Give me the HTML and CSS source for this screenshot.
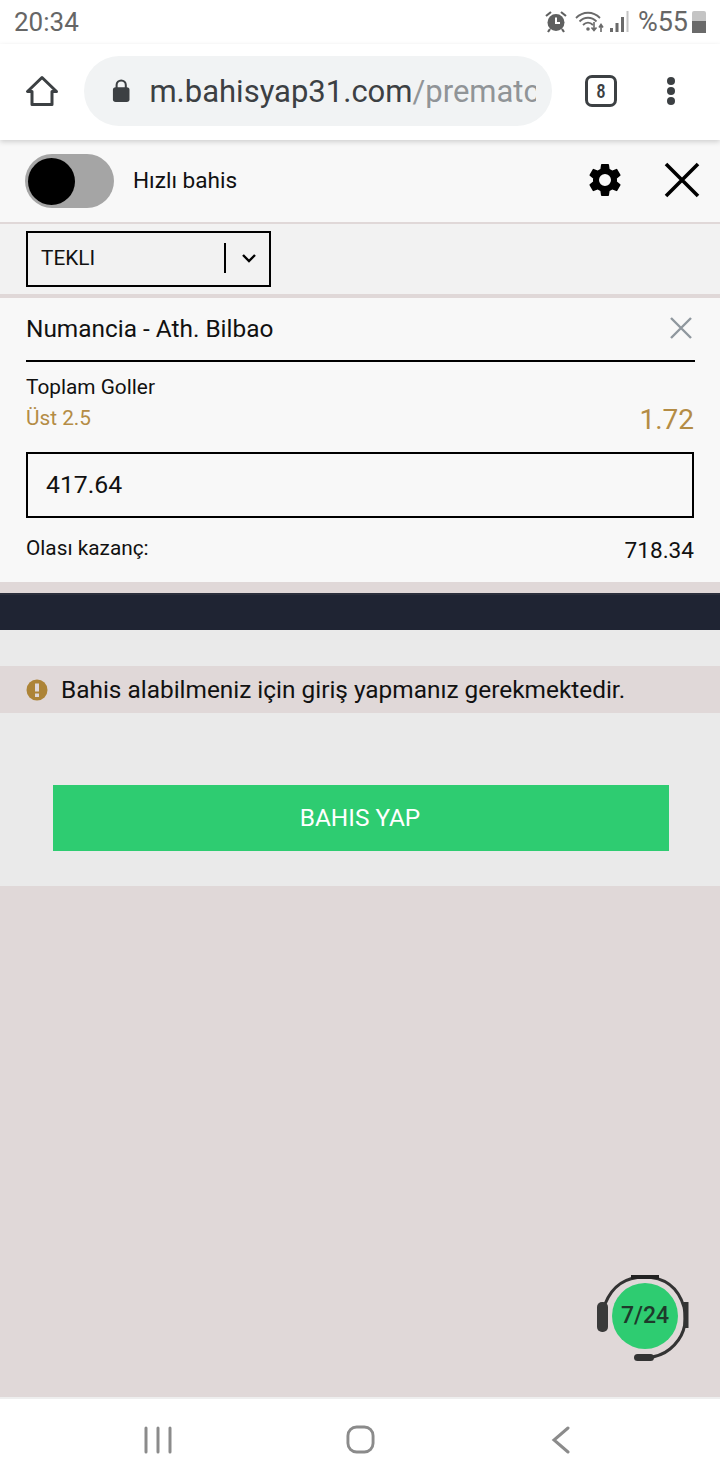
FILE: index.html
```html
<!DOCTYPE html>
<html lang="tr">
<head>
    <meta charset="UTF-8">
    <meta name="viewport" content="width=device-width, initial-scale=1.0">
    <title>Bahis</title>
    <link rel="stylesheet" href="styles.css">
</head>
<body>
    <div class="statusBar">
        <span class="clock">20:34</span>
        <div class="statusIcons">
            <svg class="alarm" width="24" height="24" viewBox="0 0 24 24">
                <circle cx="12" cy="12.5" r="8.5" fill="#5f6060"/>
                <path d="M12 7.5v5.5h4" fill="none" stroke="#fff" stroke-width="2"/>
                <path d="M2 6l5-4M22 6l-5-4M6 19l-2 3M18 19l2 3" fill="none" stroke="#5f6060" stroke-width="2.2"/>
            </svg>
            <svg class="wifi" width="30" height="24" viewBox="0 0 30 24">
                <path d="M1 8c7-7 17-7 24 0M4.500 11.500c5-5 12-5 17 0M8 15c3-3 7-3 10 0" fill="none" stroke="#6a6a6a" stroke-width="1.800"/>
                <circle cx="13" cy="19" r="1.800" fill="#6a6a6a"/>
                <path d="M19 12v8M16.500 17.500l2.500 3 2.500-3M26 22v-7M24 17.500l2-3 2 3" fill="none" stroke="#6a6a6a" stroke-width="1.600"/>
            </svg>
            <svg class="signal" width="20" height="24" viewBox="0 0 20 24">
                <rect x="1" y="18" width="3" height="4" fill="#6a6a6a"/>
                <rect x="6.500" y="13" width="3" height="9" fill="#6a6a6a"/>
                <rect x="12" y="7" width="3" height="15" fill="#6a6a6a"/>
                <rect x="17.500" y="1" width="2" height="21" fill="#c4c4c4"/>
            </svg>
            <span class="battery">%55</span>
            <div class="batteryIcon"><div class="batteryFill"></div></div>
        </div>
    </div>

    <div class="toolbar">
        <svg class="homeIcon" width="36" height="36" viewBox="0 0 36 36">
            <path d="M18 4.500L3.500 18.500h4.500v13h20v-13h4.500z" fill="none" stroke="#3c4043" stroke-width="3" stroke-linejoin="round"/>
        </svg>
        <div class="urlBar">
            <svg class="lockIcon" width="20" height="26" viewBox="0 0 20 26">
                <rect x="1" y="9" width="18" height="16" rx="3" fill="#3c4043"/>
                <path d="M5 10V6.500a5 5 0 0 1 10 0V10" fill="none" stroke="#3c4043" stroke-width="2.200"/>
            </svg>
            <div class="url"><span class="urlHost">m.bahisyap31.com</span>/prematch/</div>
        </div>
        <div class="tabCount"><span class="tabDigit">8</span></div>
        <div class="menuDots"><i></i><i></i><i></i></div>
    </div>

    <div class="quickBar">
        <div class="toggle"><div class="knob"></div></div>
        <span class="quickLabel">Hızlı bahis</span>
        <svg class="gear" width="40" height="40" viewBox="0 0 24 24">
            <path d="M19.140 12.940c.04-.3.060-.61.060-.94 0-.32-.02-.64-.07-.94l2.030-1.580a.49.49 0 0 0 .12-.61l-1.920-3.320a.49.49 0 0 0-.59-.22l-2.390.96c-.5-.38-1.030-.7-1.620-.94l-.36-2.540a.48.48 0 0 0-.48-.41h-3.840a.47.47 0 0 0-.47.41l-.36 2.540c-.59.24-1.130.57-1.620.94l-2.390-.96a.48.48 0 0 0-.59.22L2.740 8.870a.48.48 0 0 0 .12.61l2.030 1.580c-.05.3-.09.63-.09.94s.02.64.07.94l-2.030 1.580a.49.49 0 0 0-.12.61l1.920 3.320c.12.22.37.29.59.22l2.390-.96c.5.38 1.030.7 1.620.94l.36 2.540c.05.24.24.41.48.41h3.840c.24 0 .44-.17.47-.41l.36-2.540c.59-.24 1.130-.56 1.620-.94l2.390.96c.22.08.47 0 .59-.22l1.920-3.320a.48.48 0 0 0-.12-.61zM12 15.600a3.600 3.600 0 1 1 0-7.200 3.600 3.600 0 0 1 0 7.200z" fill="#000"/>
        </svg>
        <svg class="closeBig" width="36" height="36" viewBox="0 0 36 36">
            <path d="M2 2l32 32M34 2L2 34" fill="none" stroke="#000" stroke-width="3.600"/>
        </svg>
    </div>

    <div class="typeRow">
        <div class="typeSelect">
            <span class="typeText">TEKLI</span>
            <div class="typeSep"></div>
            <svg width="16" height="10" viewBox="0 0 16 10">
                <path d="M2 2l6 6 6-6" fill="none" stroke="#000" stroke-width="2.400"/>
            </svg>
        </div>
    </div>

    <div class="betCard">
        <div class="matchRow">
            <span class="matchName">Numancia - Ath. Bilbao</span>
            <svg width="24" height="24" viewBox="0 0 24 24">
                <path d="M2 2l20 20M22 2L2 22" fill="none" stroke="#8f979e" stroke-width="2.400"/>
            </svg>
        </div>
        <div class="marketName">Toplam Goller</div>
        <div class="pickRow">
            <span class="pickName">Üst 2.5</span>
            <span class="odds">1.72</span>
        </div>
        <div class="stakeBox">417.64</div>
        <div class="winRow">
            <span class="winLabel">Olası kazanç:</span>
            <span class="winValue">718.34</span>
        </div>
    </div>

    <div class="darkBar"></div>

    <div class="betArea">
        <div class="notice">
            <svg width="22" height="22" viewBox="0 0 22 22">
                <circle cx="11" cy="11" r="10.500" fill="#ad8437"/>
                <rect x="9" y="4.500" width="4" height="8" fill="#e0d8d8"/>
                <rect x="9" y="14.500" width="4" height="3.500" fill="#e0d8d8"/>
            </svg>
            <span>Bahis alabilmeniz için giriş yapmanız gerekmektedir.</span>
        </div>
        <button class="betBtn">BAHIS YAP</button>
    </div>

    <div class="emptyArea">
        <div class="support">
            <svg class="headset" width="98" height="92" viewBox="0 0 98 92">
                <path d="M10 30C18 10 32 3 49 3c20 0 34 10 40 30 4 18-2 32-14 42-6 5-14 8-24 9" fill="none" stroke="#333" stroke-width="3"/>
                <path d="M36 3h28" stroke="#222" stroke-width="4"/>
                <rect x="2" y="28" width="11" height="30" rx="5" fill="#3a3a3a"/>
                <path d="M91 28v26" stroke="#333" stroke-width="5"/>
                <rect x="39" y="80" width="20" height="7" rx="3.500" fill="#333"/>
            </svg>
            <div class="supportBadge">7/24</div>
        </div>
    </div>

    <div class="navBar">
        <svg width="28" height="28" viewBox="0 0 28 28">
            <path d="M2 2v24M14 2v24M26 2v24" fill="none" stroke="#8b8b8b" stroke-width="3" stroke-linecap="round"/>
        </svg>
        <svg class="navHome" width="29" height="29" viewBox="0 0 30 30">
            <rect x="2" y="2" width="26" height="26" rx="9" fill="none" stroke="#8b8b8b" stroke-width="3"/>
        </svg>
        <svg width="20" height="28" viewBox="0 0 20 28">
            <path d="M17 2L3 14l14 12" fill="none" stroke="#8b8b8b" stroke-width="3" stroke-linecap="round"/>
        </svg>
    </div>
</body>
</html>
```

FILE: styles.css
```css
*{box-sizing: border-box;}
html, body{
    margin: 0;
    padding: 0;
}
body{
    width: 720px;
    height: 1480px;
    overflow: hidden;
    background: #fff;
    font-family: Roboto, "Liberation Sans", sans-serif;
    color: #111;
}
.statusBar{
    display: flex;
    justify-content: space-between;
    align-items: center;
    height: 44px;
    padding: 0 14px 0 14px;
    color: #666;
}
.clock{
    font-size: 26px;
}
.statusIcons{
    display: flex;
    align-items: center;
    gap: 4px;
}
.wifi{
    margin-left: 3px;
}
.battery{
    margin-left: 5px;
    font-size: 27px;
}
.batteryIcon{
    width: 14px;
    height: 22px;
    background: #c4c4c4;
    border-radius: 2px 2px 0 0;
    display: flex;
    align-items: flex-end;
}
.batteryFill{
    width: 100%;
    height: 12px;
    background: #6a6a6a;
}
.toolbar{
    display: flex;
    align-items: center;
    height: 96px;
    padding: 0 0 2px 24px;
    position: relative;
    z-index: 1;
    background: #fff;
    box-shadow: 0 2px 5px rgba(0,0,0,0.16);
}
.urlBar{
    display: flex;
    align-items: center;
    width: 468px;
    height: 70px;
    margin-left: 24px;
    padding: 0 16px 0 28px;
    background: #f1f3f4;
    border-radius: 35px;
}
.url{
    margin-left: 19px;
    font-size: 31px;
    color: #909497;
    white-space: nowrap;
    overflow: hidden;
}
.urlHost{
    color: #3c4043;
}
.tabCount{
    width: 32px;
    height: 32px;
    margin-left: 33px;
    border: 3px solid #3c4043;
    border-radius: 7px;
    font-family: "Liberation Sans", sans-serif;
    font-size: 21px;
    font-weight: bold;
    line-height: 26px;
    text-align: center;
    color: #3c4043;
}
.tabDigit{
    display: inline-block;
    transform: scaleX(0.72);
}
.menuDots{
    display: flex;
    flex-direction: column;
    gap: 2px;
    margin-left: 50px;
}
.menuDots i{
    width: 8px;
    height: 8px;
    background: #3c4043;
    border-radius: 50%;
}
.quickBar{
    display: flex;
    align-items: center;
    height: 84px;
    padding: 0 20px 0 25px;
    background: #f8f8f8;
    border-bottom: 2px solid #e0d8d8;
}
.toggle{
    width: 89px;
    height: 54px;
    padding: 4px 3px;
    background: #a5a5a5;
    border-radius: 27px;
}
.knob{
    width: 47px;
    height: 47px;
    background: #000;
    border-radius: 50%;
}
.quickLabel{
    margin: 0 0 2px 19px;
    font-size: 22.6px;
    flex: 1;
}
.gear{
    margin: 0 39px 2px 0;
}
.closeBig{
    margin-bottom: 2px;
}
.typeRow{
    height: 74px;
    padding: 7px 26px 0;
    background: #f2f2f2;
    border-bottom: 4px solid #e0d8d8;
}
.typeSelect{
    display: flex;
    align-items: center;
    width: 245px;
    height: 56px;
    padding: 0 12px 2px 13px;
    border: 2px solid #000;
}
.typeText{
    flex: 1;
    font-size: 20.8px;
}
.typeSep{
    width: 2px;
    height: 30px;
    margin-right: 15px;
    background: #000;
}
.betCard{
    height: 295px;
    padding: 0 25px 0 26px;
    background: #f8f8f8;
    border-bottom: 11px solid #e0d8d8;
}
.matchRow{
    display: flex;
    justify-content: space-between;
    align-items: center;
    height: 64px;
    padding: 0 2px 2px 0;
    border-bottom: 2px solid #000;
    font-size: 24.4px;
}
.marketName{
    margin-top: 13px;
    font-size: 20.8px;
    line-height: 24px;
}
.pickRow{
    display: flex;
    justify-content: space-between;
    align-items: flex-start;
    height: 34px;
    color: #b48c45;
}
.pickName{
    margin-top: 4px;
    font-size: 20.8px;
    line-height: 30px;
}
.odds{
    margin: 4px 1px 0 0;
    font-size: 28px;
}
.stakeBox{
    height: 66px;
    margin: 19px 1px 0 0;
    padding-left: 18px;
    border: 2px solid #000;
    font-size: 24.8px;
    line-height: 62px;
}
.winRow{
    display: flex;
    justify-content: space-between;
    align-items: flex-start;
    height: 60px;
    padding: 18px 1px 0 0;
    font-size: 20.8px;
}
.winValue{
    font-size: 22.6px;
    margin-top: 1px;
}
.darkBar{
    height: 37px;
    background: #1f2433;
    border-top: 2px solid #2b2f3c;
}
.betArea{
    height: 256px;
    padding-top: 36px;
    background: #eaeaea;
}
.notice{
    display: flex;
    align-items: center;
    gap: 13px;
    height: 47px;
    padding-left: 26px;
    background: #e0d8d8;
    font-size: 24.4px;
}
.betBtn{
    display: block;
    width: 616px;
    height: 66px;
    margin: 72px 0 0 53px;
    padding: 0 2px 2px 0;
    border: 0;
    background: #2ecc71;
    color: #fff;
    font-family: Roboto, sans-serif;
    font-size: 24.4px;
}
.emptyArea{
    position: relative;
    height: 511px;
    background: #e0d8d8;
}
.support{
    position: absolute;
    left: 595px;
    top: 388px;
    width: 98px;
    height: 92px;
}
.supportBadge{
    position: absolute;
    left: 17px;
    top: 9px;
    width: 66px;
    height: 66px;
    background: #2ecc71;
    border-radius: 50%;
    font-family: Roboto, sans-serif;
    font-size: 23px;
    font-weight: 500;
    line-height: 66px;
    text-align: center;
    color: #1e3a2b;
}
.navBar{
    display: flex;
    justify-content: space-between;
    align-items: center;
    height: 83px;
    padding: 0 149px 0 144px;
    background: #fff;
    border-top: 2px solid #eee;
}
.navHome{
    margin-right: 3px;
}
```
